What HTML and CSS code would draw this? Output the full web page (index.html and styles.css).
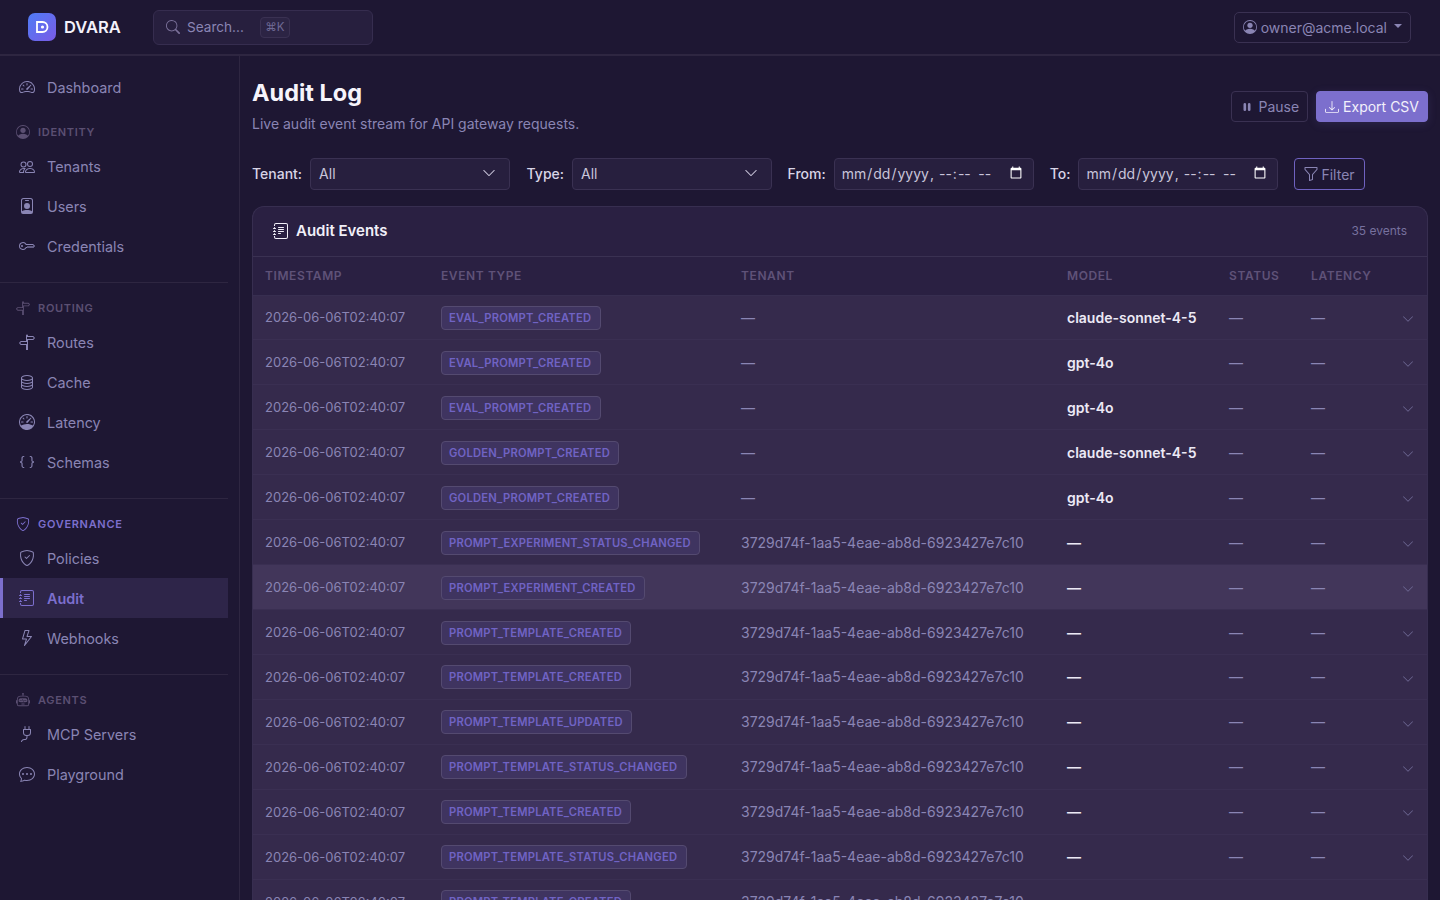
FILE: index.html
```html
<!DOCTYPE html>
<html lang="en">
<head>
<meta charset="UTF-8">
<title>DVARA - Audit Log</title>
<link rel="stylesheet" href="styles.css">
</head>
<body>

<svg class="sprite" xmlns="http://www.w3.org/2000/svg">
  <symbol id="i-speedometer2" viewBox="0 0 16 16"><path d="M8 4a.5.5 0 0 1 .5.5V6a.5.5 0 0 1-1 0V4.5A.5.5 0 0 1 8 4M3.732 5.732a.5.5 0 0 1 .707 0l.915.914a.5.5 0 1 1-.708.708l-.914-.915a.5.5 0 0 1 0-.707M2 10a.5.5 0 0 1 .5-.5h1.586a.5.5 0 0 1 0 1H2.5A.5.5 0 0 1 2 10m9.5 0a.5.5 0 0 1 .5-.5h1.5a.5.5 0 0 1 0 1H12a.5.5 0 0 1-.5-.5m.754-4.246a.39.39 0 0 0-.527-.02L7.547 9.31a.91.91 0 1 0 1.302 1.258l3.434-4.297a.39.39 0 0 0-.029-.518z"/><path fill-rule="evenodd" d="M0 10a8 8 0 1 1 15.547 2.661c-.442 1.253-1.845 1.602-2.932 1.25C11.309 13.488 9.475 13 8 13c-1.474 0-3.31.488-4.615.911-1.087.352-2.49.003-2.932-1.25A8 8 0 0 1 0 10m8-7a7 7 0 0 0-6.603 9.329c.203.575.923.876 1.68.63C4.397 12.533 6.358 12 8 12s3.604.532 4.923.96c.757.245 1.477-.056 1.68-.631A7 7 0 0 0 8 3"/></symbol>
  <symbol id="i-person-circle" viewBox="0 0 16 16"><path d="M11 6a3 3 0 1 1-6 0 3 3 0 0 1 6 0"/><path fill-rule="evenodd" d="M0 8a8 8 0 1 1 16 0A8 8 0 0 1 0 8m8-7a7 7 0 0 0-5.468 11.37C3.242 11.226 4.805 10 8 10s4.757 1.225 5.468 2.37A7 7 0 0 0 8 1"/></symbol>
  <symbol id="i-people" viewBox="0 0 16 16"><path d="M15 14s1 0 1-1-1-4-5-4-5 3-5 4 1 1 1 1zm-7.978-1L7 12.996c.001-.264.167-1.03.76-1.72C8.312 10.629 9.282 10 11 10c1.717 0 2.687.63 3.24 1.276.593.69.758 1.457.76 1.72l-.008.002-.014.002zM11 7a2 2 0 1 0 0-4 2 2 0 0 0 0 4m3-2a3 3 0 1 1-6 0 3 3 0 0 1 6 0M6.936 9.28a6 6 0 0 0-1.23-.247A7 7 0 0 0 5 9c-4 0-5 3-5 4q0 1 1 1h4.216A2.24 2.24 0 0 1 5 13c0-1.01.377-2.042 1.09-2.904.243-.294.526-.569.846-.816M4.92 10A5.5 5.5 0 0 0 4 13H1c0-.26.164-1.03.76-1.724.545-.636 1.492-1.256 3.16-1.275ZM1.5 5.5a3 3 0 1 1 6 0 3 3 0 0 1-6 0m3-2a2 2 0 1 0 0 4 2 2 0 0 0 0-4"/></symbol>
  <symbol id="i-person-badge" viewBox="0 0 16 16"><path d="M6.5 2a.5.5 0 0 0 0 1h3a.5.5 0 0 0 0-1zM11 8a3 3 0 1 1-6 0 3 3 0 0 1 6 0"/><path d="M4.5 0A2.5 2.5 0 0 0 2 2.5V14a2 2 0 0 0 2 2h8a2 2 0 0 0 2-2V2.5A2.5 2.5 0 0 0 11.5 0zM3 2.5A1.5 1.5 0 0 1 4.5 1h7A1.5 1.5 0 0 1 13 2.5v10.795a4.2 4.2 0 0 0-.776-.492C11.392 12.387 10.063 12 8 12s-3.392.387-4.224.803a4.2 4.2 0 0 0-.776.492z"/></symbol>
  <symbol id="i-key" viewBox="0 0 16 16"><path d="M0 8a4 4 0 0 1 7.465-2H14a.5.5 0 0 1 .354.146l1.5 1.5a.5.5 0 0 1 0 .708l-1.5 1.5a.5.5 0 0 1-.708 0L13 9.207l-.646.647a.5.5 0 0 1-.708 0L11 9.207l-.646.647a.5.5 0 0 1-.708 0L9 9.207l-.646.647A.5.5 0 0 1 8 10h-.535A4 4 0 0 1 0 8m4-3a3 3 0 1 0 2.712 4.285A.5.5 0 0 1 7.163 9h.63l.853-.854a.5.5 0 0 1 .708 0l.646.647.646-.647a.5.5 0 0 1 .708 0l.646.647.646-.647a.5.5 0 0 1 .708 0l.646.647.793-.793-1-1h-6.63a.5.5 0 0 1-.451-.285A3 3 0 0 0 4 5"/><path d="M4 8a1 1 0 1 1-2 0 1 1 0 0 1 2 0"/></symbol>
  <symbol id="i-signpost" viewBox="0 0 16 16"><path d="M7 7V1.414a1 1 0 0 1 2 0V2h5a1 1 0 0 1 .8.4l.975 1.3a.5.5 0 0 1 0 .6L14.8 5.6a1 1 0 0 1-.8.4H9v10H7v-5H2a1 1 0 0 1-.8-.4L.225 9.3a.5.5 0 0 1 0-.6L1.2 7.4A1 1 0 0 1 2 7zm1 3V8H2l-.75 1L2 10zm0-5h6l.75-1L14 3H8z"/></symbol>
  <symbol id="i-database" viewBox="0 0 16 16"><path d="M4.318 2.687C5.234 2.271 6.536 2 8 2s2.766.27 3.682.687C12.644 3.125 13 3.627 13 4c0 .374-.356.875-1.318 1.313C10.766 5.729 9.464 6 8 6s-2.766-.27-3.682-.687C3.356 4.875 3 4.373 3 4c0-.374.356-.875 1.318-1.313M13 5.698V7c0 .374-.356.875-1.318 1.313C10.766 8.729 9.464 9 8 9s-2.766-.27-3.682-.687C3.356 7.875 3 7.373 3 7V5.698c.271.202.58.378.904.525C4.978 6.711 6.427 7 8 7s3.022-.289 4.096-.777A5 5 0 0 0 13 5.698M14 4c0-1.007-.875-1.755-1.904-2.223C11.022 1.289 9.573 1 8 1s-3.022.289-4.096.777C2.875 2.245 2 2.993 2 4v9c0 1.007.875 1.755 1.904 2.223C4.978 15.71 6.427 16 8 16s3.022-.289 4.096-.777C13.125 14.755 14 14.007 14 13zm-1 4.698V10c0 .374-.356.875-1.318 1.313C10.766 11.729 9.464 12 8 12s-2.766-.27-3.682-.687C3.356 10.875 3 10.373 3 10V8.698c.271.202.58.378.904.525C4.978 9.71 6.427 10 8 10s3.022-.289 4.096-.777A5 5 0 0 0 13 8.698m0 3V13c0 .374-.356.875-1.318 1.313C10.766 14.729 9.464 15 8 15s-2.766-.27-3.682-.687C3.356 13.875 3 13.373 3 13v-1.302c.271.202.58.378.904.525C4.978 12.71 6.427 13 8 13s3.022-.289 4.096-.777c.324-.147.633-.323.904-.525"/></symbol>
  <symbol id="i-speedometer" viewBox="0 0 16 16"><path d="M8 2a.5.5 0 0 1 .5.5V4a.5.5 0 0 1-1 0V2.5A.5.5 0 0 1 8 2M3.732 3.732a.5.5 0 0 1 .707 0l.915.914a.5.5 0 1 1-.708.708l-.914-.915a.5.5 0 0 1 0-.707M2 8a.5.5 0 0 1 .5-.5h1.586a.5.5 0 0 1 0 1H2.5A.5.5 0 0 1 2 8m9.5 0a.5.5 0 0 1 .5-.5h1.5a.5.5 0 0 1 0 1H12a.5.5 0 0 1-.5-.5m.754-4.246a.39.39 0 0 0-.527-.02L7.547 7.31A.91.91 0 1 0 8.85 8.569l3.434-4.297a.39.39 0 0 0-.029-.518z"/><path fill-rule="evenodd" d="M6.664 15.889A8 8 0 1 1 9.336.11a8 8 0 0 1-2.672 15.78zm-4.665-4.283A11.95 11.95 0 0 1 8 10c2.186 0 4.236.585 6.001 1.606a7 7 0 1 0-12.002 0"/></symbol>
  <symbol id="i-braces" viewBox="0 0 16 16"><path d="M2.114 8.063V7.9c1.005-.102 1.497-.615 1.497-1.6V4.503c0-1.094.39-1.538 1.354-1.538h.273V2h-.376C3.25 2 2.49 2.759 2.49 4.352v1.524c0 1.094-.376 1.456-1.49 1.456v1.299c1.114 0 1.49.362 1.49 1.456v1.524c0 1.593.759 2.352 2.372 2.352h.376v-.964h-.273c-.964 0-1.354-.444-1.354-1.538V9.663c0-.984-.492-1.497-1.497-1.6M13.886 7.9v.163c-1.005.103-1.497.616-1.497 1.6v1.798c0 1.094-.39 1.538-1.354 1.538h-.273v.964h.376c1.613 0 2.372-.759 2.372-2.352v-1.524c0-1.094.376-1.456 1.49-1.456V7.332c-1.114 0-1.49-.362-1.49-1.456V4.352C13.51 2.759 12.75 2 11.138 2h-.376v.964h.273c.964 0 1.354.444 1.354 1.538V6.3c0 .984.492 1.497 1.497 1.6"/></symbol>
  <symbol id="i-shield" viewBox="0 0 16 16"><path d="M5.338 1.59a61 61 0 0 0-2.837.856.48.48 0 0 0-.328.39c-.554 4.157.726 7.19 2.253 9.188a10.7 10.7 0 0 0 2.287 2.233c.346.244.652.42.893.533q.18.085.293.118a1 1 0 0 0 .101.025 1 1 0 0 0 .1-.025q.114-.034.294-.118c.24-.113.547-.29.893-.533a10.7 10.7 0 0 0 2.287-2.233c1.527-1.997 2.807-5.031 2.253-9.188a.48.48 0 0 0-.328-.39c-.651-.213-1.75-.56-2.837-.855C9.552 1.29 8.531 1.067 8 1.067c-.53 0-1.552.223-2.662.524zM5.072.56C6.157.265 7.31 0 8 0s1.843.265 2.928.56c1.11.3 2.229.655 2.887.87a1.54 1.54 0 0 1 1.044 1.262c.596 4.477-.787 7.795-2.465 9.99a11.8 11.8 0 0 1-2.517 2.453 7 7 0 0 1-1.048.625c-.28.132-.581.24-.829.24s-.548-.108-.829-.24a7 7 0 0 1-1.048-.625 11.8 11.8 0 0 1-2.517-2.453C1.928 10.487.545 7.169 1.141 2.692A1.54 1.54 0 0 1 2.185 1.43 63 63 0 0 1 5.072.56"/><path d="M10.854 5.146a.5.5 0 0 1 0 .708l-3 3a.5.5 0 0 1-.708 0l-1.5-1.5a.5.5 0 1 1 .708-.708L7.5 7.793l2.646-2.647a.5.5 0 0 1 .708 0"/></symbol>
  <symbol id="i-journal" viewBox="0 0 16 16"><path d="M5 10.5a.5.5 0 0 1 .5-.5h2a.5.5 0 0 1 0 1h-2a.5.5 0 0 1-.5-.5m0-2a.5.5 0 0 1 .5-.5h5a.5.5 0 0 1 0 1h-5a.5.5 0 0 1-.5-.5m0-2a.5.5 0 0 1 .5-.5h5a.5.5 0 0 1 0 1h-5a.5.5 0 0 1-.5-.5m0-2a.5.5 0 0 1 .5-.5h5a.5.5 0 0 1 0 1h-5a.5.5 0 0 1-.5-.5"/><path d="M3 0h10a2 2 0 0 1 2 2v12a2 2 0 0 1-2 2H3a2 2 0 0 1-2-2v-1h1v1a1 1 0 0 0 1 1h10a1 1 0 0 0 1-1V2a1 1 0 0 0-1-1H3a1 1 0 0 0-1 1v1H1V2a2 2 0 0 1 2-2"/><path d="M1 5v-.5a.5.5 0 0 1 1 0V5h.5a.5.5 0 0 1 0 1h-2a.5.5 0 0 1 0-1zm0 3v-.5a.5.5 0 0 1 1 0V8h.5a.5.5 0 0 1 0 1h-2a.5.5 0 0 1 0-1zm0 3v-.5a.5.5 0 0 1 1 0v.5h.5a.5.5 0 0 1 0 1h-2a.5.5 0 0 1 0-1z"/></symbol>
  <symbol id="i-lightning" viewBox="0 0 16 16"><path d="M5.52.359A.5.5 0 0 1 6 0h4a.5.5 0 0 1 .474.658L8.694 6H12.5a.5.5 0 0 1 .395.807l-7 9a.5.5 0 0 1-.873-.454L6.823 9.5H3.5a.5.5 0 0 1-.48-.641zM6.374 1 4.168 8.5H7.5a.5.5 0 0 1 .478.647L6.78 13.04 11.478 7H8a.5.5 0 0 1-.474-.658L9.306 1z"/></symbol>
  <symbol id="i-robot" viewBox="0 0 16 16"><path d="M6 12.5a.5.5 0 0 1 .5-.5h3a.5.5 0 0 1 0 1h-3a.5.5 0 0 1-.5-.5M3 8.062C3 6.76 4.235 5.765 5.53 5.886a26.6 26.6 0 0 0 4.94 0C11.765 5.765 13 6.76 13 8.062v1.157a.93.93 0 0 1-.765.935c-.845.147-2.34.346-4.235.346s-3.39-.2-4.235-.346A.93.93 0 0 1 3 9.219zm4.542-.827a.25.25 0 0 0-.217.068l-.92.9a25 25 0 0 1-1.871-.183.25.25 0 0 0-.068.495c.55.076 1.232.149 2.02.193a.25.25 0 0 0 .189-.071l.754-.736.847 1.71a.25.25 0 0 0 .404.062l.932-.97a25 25 0 0 0 1.922-.188.25.25 0 0 0-.068-.495c-.538.074-1.207.145-1.98.189a.25.25 0 0 0-.166.076l-.754.785-.842-1.7a.25.25 0 0 0-.182-.135"/><path d="M8.5 1.866a1 1 0 1 0-1 0V3h-2A4.5 4.5 0 0 0 1 7.5V8a1 1 0 0 0-1 1v2a1 1 0 0 0 1 1v1a2 2 0 0 0 2 2h10a2 2 0 0 0 2-2v-1a1 1 0 0 0 1-1V9a1 1 0 0 0-1-1v-.5A4.5 4.5 0 0 0 10.5 3h-2zM14 7.5V13a1 1 0 0 1-1 1H3a1 1 0 0 1-1-1V7.5A3.5 3.5 0 0 1 5.5 4h5A3.5 3.5 0 0 1 14 7.5"/></symbol>
  <symbol id="i-plug" viewBox="0 0 16 16"><path d="M6 0a.5.5 0 0 1 .5.5V3h3V.5a.5.5 0 0 1 1 0V3h1a.5.5 0 0 1 .5.5v3A3.5 3.5 0 0 1 8.5 10c-.002.434-.01.845-.04 1.22-.041.514-.126 1.003-.317 1.424a2.08 2.08 0 0 1-.97 1.028C6.725 13.9 6.169 14 5.5 14c-.998 0-1.61.33-1.974.718A1.92 1.92 0 0 0 3 16H2c0-.616.232-1.367.797-1.968C3.374 13.42 4.261 13 5.5 13c.581 0 .962-.088 1.218-.219.241-.123.4-.3.514-.55.121-.266.193-.621.23-1.09.027-.34.035-.718.037-1.141A3.5 3.5 0 0 1 4 6.5v-3a.5.5 0 0 1 .5-.5h1V.5A.5.5 0 0 1 6 0M5 4v2.5A2.5 2.5 0 0 0 7.5 9h1A2.5 2.5 0 0 0 11 6.5V4z"/></symbol>
  <symbol id="i-chat" viewBox="0 0 16 16"><path d="M5 8a1 1 0 1 1-2 0 1 1 0 0 1 2 0m4 0a1 1 0 1 1-2 0 1 1 0 0 1 2 0m3 1a1 1 0 1 0 0-2 1 1 0 0 0 0 2"/><path d="m2.165 15.803.02-.004c1.83-.363 2.948-.842 3.468-1.105A9 9 0 0 0 8 15c4.418 0 8-3.134 8-7s-3.582-7-8-7-8 3.134-8 7c0 1.76.743 3.37 1.97 4.6a10.4 10.4 0 0 1-.524 2.318l-.003.011a11 11 0 0 1-.244.637c-.079.186.074.394.273.362a22 22 0 0 0 .693-.125m.8-3.108a1 1 0 0 0-.287-.801C1.618 10.83 1 9.468 1 8c0-3.192 3.004-6 7-6s7 2.808 7 6-3.004 6-7 6a8 8 0 0 1-2.088-.272 1 1 0 0 0-.711.074c-.387.196-1.24.57-2.634.893a11 11 0 0 0 .398-2"/></symbol>
  <symbol id="i-search" viewBox="0 0 16 16"><path d="M11.742 10.344a6.5 6.5 0 1 0-1.397 1.398h-.001q.044.06.098.115l3.85 3.85a1 1 0 0 0 1.415-1.414l-3.85-3.85a1 1 0 0 0-.115-.1zM12 6.5a5.5 5.5 0 1 1-11 0 5.5 5.5 0 0 1 11 0"/></symbol>
  <symbol id="i-download" viewBox="0 0 16 16"><path d="M.5 9.9a.5.5 0 0 1 .5.5v2.5a1 1 0 0 0 1 1h12a1 1 0 0 0 1-1v-2.5a.5.5 0 0 1 1 0v2.5a2 2 0 0 1-2 2H2a2 2 0 0 1-2-2v-2.5a.5.5 0 0 1 .5-.5"/><path d="M7.646 11.854a.5.5 0 0 0 .708 0l3-3a.5.5 0 0 0-.708-.708L8.5 10.293V1.5a.5.5 0 0 0-1 0v8.793L5.354 8.146a.5.5 0 1 0-.708.708z"/></symbol>
  <symbol id="i-funnel" viewBox="0 0 16 16"><path d="M1.5 1.5A.5.5 0 0 1 2 1h12a.5.5 0 0 1 .5.5v2a.5.5 0 0 1-.128.334L10 8.692V13.5a.5.5 0 0 1-.342.474l-3 1A.5.5 0 0 1 6 14.5V8.692L1.628 3.834A.5.5 0 0 1 1.5 3.5zm1 .5v1.308l4.372 4.858A.5.5 0 0 1 7 8.5v5.306l2-.666V8.5a.5.5 0 0 1 .128-.334L13.5 3.308V2z"/></symbol>
  <symbol id="i-pause" viewBox="0 0 16 16"><path d="M5.5 3.5A1.5 1.5 0 0 1 7 5v6a1.5 1.5 0 0 1-3 0V5a1.5 1.5 0 0 1 1.5-1.5m5 0A1.5 1.5 0 0 1 12 5v6a1.5 1.5 0 0 1-3 0V5a1.5 1.5 0 0 1 1.5-1.5"/></symbol>
  <symbol id="i-chevron" viewBox="0 0 16 16"><path fill-rule="evenodd" d="M1.646 4.646a.5.5 0 0 1 .708 0L8 10.293l5.646-5.647a.5.5 0 0 1 .708.708l-6 6a.5.5 0 0 1-.708 0l-6-6a.5.5 0 0 1 0-.708"/></symbol>
</svg>

<header class="topbar">
  <a class="brand" href="#">
    <span class="brand-mark">
      <svg viewBox="0 0 28 28" width="28" height="28"><path fill="none" stroke="#fff" stroke-width="1.8" d="M9 9h5.500a5 5 0 0 1 0 10H9z"/><circle cx="14.500" cy="14" r="1.600" fill="#fff"/></svg>
    </span>
    DVARA
  </a>
  <div class="search">
    <svg class="icon"><use href="#i-search"/></svg>
    <span>Search...</span>
    <kbd>⌘K</kbd>
  </div>
  <button class="user-btn">
    <svg class="icon"><use href="#i-person-circle"/></svg>
    owner@acme.local
    <span class="caret"></span>
  </button>
</header>

<div class="layout">
  <aside class="sidebar">
    <a class="nav-item" href="#"><svg class="icon"><use href="#i-speedometer2"/></svg>Dashboard</a>

    <div class="nav-label"><svg class="icon"><use href="#i-person-circle"/></svg>IDENTITY</div>
    <a class="nav-item" href="#"><svg class="icon"><use href="#i-people"/></svg>Tenants</a>
    <a class="nav-item" href="#"><svg class="icon"><use href="#i-person-badge"/></svg>Users</a>
    <a class="nav-item" href="#"><svg class="icon"><use href="#i-key"/></svg>Credentials</a>

    <hr class="nav-divider">
    <div class="nav-label"><svg class="icon"><use href="#i-signpost"/></svg>ROUTING</div>
    <a class="nav-item" href="#"><svg class="icon"><use href="#i-signpost"/></svg>Routes</a>
    <a class="nav-item" href="#"><svg class="icon"><use href="#i-database"/></svg>Cache</a>
    <a class="nav-item" href="#"><svg class="icon"><use href="#i-speedometer"/></svg>Latency</a>
    <a class="nav-item" href="#"><svg class="icon"><use href="#i-braces"/></svg>Schemas</a>

    <hr class="nav-divider">
    <div class="nav-label active"><svg class="icon"><use href="#i-shield"/></svg>GOVERNANCE</div>
    <a class="nav-item" href="#"><svg class="icon"><use href="#i-shield"/></svg>Policies</a>
    <a class="nav-item active" href="#"><svg class="icon"><use href="#i-journal"/></svg>Audit</a>
    <a class="nav-item" href="#"><svg class="icon"><use href="#i-lightning"/></svg>Webhooks</a>

    <hr class="nav-divider">
    <div class="nav-label"><svg class="icon"><use href="#i-robot"/></svg>AGENTS</div>
    <a class="nav-item" href="#"><svg class="icon"><use href="#i-plug"/></svg>MCP Servers</a>
    <a class="nav-item" href="#"><svg class="icon"><use href="#i-chat"/></svg>Playground</a>
  </aside>

  <main class="content">
    <div class="page-head">
      <div class="page-title">
        <h1>Audit Log</h1>
        <p>Live audit event stream for API gateway requests.</p>
      </div>
      <div class="page-actions">
        <button class="btn"><svg class="icon btn-icon"><use href="#i-pause"/></svg>Pause</button>
        <button class="btn btn-primary"><svg class="icon btn-icon"><use href="#i-download"/></svg>Export CSV</button>
      </div>
    </div>

    <form class="filters">
      <label for="f-tenant">Tenant:</label>
      <div class="select" id="f-tenant">All<svg class="icon"><use href="#i-chevron"/></svg></div>
      <label for="f-type">Type:</label>
      <div class="select" id="f-type">All<svg class="icon"><use href="#i-chevron"/></svg></div>
      <label for="f-from">From:</label>
      <input class="date" id="f-from" type="datetime-local">
      <label for="f-to">To:</label>
      <input class="date" id="f-to" type="datetime-local">
      <button type="button" class="btn btn-outline"><svg class="icon"><use href="#i-funnel"/></svg>Filter</button>
    </form>

    <section class="card">
      <div class="card-head">
        <h2><svg class="icon"><use href="#i-journal"/></svg>Audit Events</h2>
        <span class="count">35 events</span>
      </div>
      <table class="events">
        <colgroup><col class="c-time"><col class="c-type"><col class="c-tenant"><col class="c-model"><col class="c-status"><col class="c-latency"><col></colgroup>
        <thead>
          <tr><th>Timestamp</th><th>Event Type</th><th>Tenant</th><th>Model</th><th>Status</th><th>Latency</th><th></th></tr>
        </thead>
        <tbody>
          <tr><td class="ts">2026-06-06T02:40:07</td><td><span class="badge">EVAL_PROMPT_CREATED</span></td><td class="muted">—</td><td class="model">claude-sonnet-4-5</td><td class="muted">—</td><td class="muted">—</td><td class="toggle"><svg class="icon"><use href="#i-chevron"/></svg></td></tr>
          <tr><td class="ts">2026-06-06T02:40:07</td><td><span class="badge">EVAL_PROMPT_CREATED</span></td><td class="muted">—</td><td class="model">gpt-4o</td><td class="muted">—</td><td class="muted">—</td><td class="toggle"><svg class="icon"><use href="#i-chevron"/></svg></td></tr>
          <tr><td class="ts">2026-06-06T02:40:07</td><td><span class="badge">EVAL_PROMPT_CREATED</span></td><td class="muted">—</td><td class="model">gpt-4o</td><td class="muted">—</td><td class="muted">—</td><td class="toggle"><svg class="icon"><use href="#i-chevron"/></svg></td></tr>
          <tr><td class="ts">2026-06-06T02:40:07</td><td><span class="badge">GOLDEN_PROMPT_CREATED</span></td><td class="muted">—</td><td class="model">claude-sonnet-4-5</td><td class="muted">—</td><td class="muted">—</td><td class="toggle"><svg class="icon"><use href="#i-chevron"/></svg></td></tr>
          <tr><td class="ts">2026-06-06T02:40:07</td><td><span class="badge">GOLDEN_PROMPT_CREATED</span></td><td class="muted">—</td><td class="model">gpt-4o</td><td class="muted">—</td><td class="muted">—</td><td class="toggle"><svg class="icon"><use href="#i-chevron"/></svg></td></tr>
          <tr><td class="ts">2026-06-06T02:40:07</td><td><span class="badge">PROMPT_EXPERIMENT_STATUS_CHANGED</span></td><td class="muted">3729d74f-1aa5-4eae-ab8d-6923427e7c10</td><td class="model">—</td><td class="muted">—</td><td class="muted">—</td><td class="toggle"><svg class="icon"><use href="#i-chevron"/></svg></td></tr>
          <tr class="hover"><td class="ts">2026-06-06T02:40:07</td><td><span class="badge">PROMPT_EXPERIMENT_CREATED</span></td><td class="muted">3729d74f-1aa5-4eae-ab8d-6923427e7c10</td><td class="model">—</td><td class="muted">—</td><td class="muted">—</td><td class="toggle"><svg class="icon"><use href="#i-chevron"/></svg></td></tr>
          <tr><td class="ts">2026-06-06T02:40:07</td><td><span class="badge">PROMPT_TEMPLATE_CREATED</span></td><td class="muted">3729d74f-1aa5-4eae-ab8d-6923427e7c10</td><td class="model">—</td><td class="muted">—</td><td class="muted">—</td><td class="toggle"><svg class="icon"><use href="#i-chevron"/></svg></td></tr>
          <tr><td class="ts">2026-06-06T02:40:07</td><td><span class="badge">PROMPT_TEMPLATE_CREATED</span></td><td class="muted">3729d74f-1aa5-4eae-ab8d-6923427e7c10</td><td class="model">—</td><td class="muted">—</td><td class="muted">—</td><td class="toggle"><svg class="icon"><use href="#i-chevron"/></svg></td></tr>
          <tr><td class="ts">2026-06-06T02:40:07</td><td><span class="badge">PROMPT_TEMPLATE_UPDATED</span></td><td class="muted">3729d74f-1aa5-4eae-ab8d-6923427e7c10</td><td class="model">—</td><td class="muted">—</td><td class="muted">—</td><td class="toggle"><svg class="icon"><use href="#i-chevron"/></svg></td></tr>
          <tr><td class="ts">2026-06-06T02:40:07</td><td><span class="badge">PROMPT_TEMPLATE_STATUS_CHANGED</span></td><td class="muted">3729d74f-1aa5-4eae-ab8d-6923427e7c10</td><td class="model">—</td><td class="muted">—</td><td class="muted">—</td><td class="toggle"><svg class="icon"><use href="#i-chevron"/></svg></td></tr>
          <tr><td class="ts">2026-06-06T02:40:07</td><td><span class="badge">PROMPT_TEMPLATE_CREATED</span></td><td class="muted">3729d74f-1aa5-4eae-ab8d-6923427e7c10</td><td class="model">—</td><td class="muted">—</td><td class="muted">—</td><td class="toggle"><svg class="icon"><use href="#i-chevron"/></svg></td></tr>
          <tr><td class="ts">2026-06-06T02:40:07</td><td><span class="badge">PROMPT_TEMPLATE_STATUS_CHANGED</span></td><td class="muted">3729d74f-1aa5-4eae-ab8d-6923427e7c10</td><td class="model">—</td><td class="muted">—</td><td class="muted">—</td><td class="toggle"><svg class="icon"><use href="#i-chevron"/></svg></td></tr>
          <tr><td class="ts">2026-06-06T02:40:07</td><td><span class="badge">PROMPT_TEMPLATE_CREATED</span></td><td class="muted">3729d74f-1aa5-4eae-ab8d-6923427e7c10</td><td class="model">—</td><td class="muted">—</td><td class="muted">—</td><td class="toggle"><svg class="icon"><use href="#i-chevron"/></svg></td></tr>
        </tbody>
      </table>
    </section>
  </main>
</div>

</body>
</html>
```

FILE: styles.css
```css
* { margin: 0; padding: 0; box-sizing: border-box; }
html, body { height: 100%; overflow: hidden; }
body { font-family: Inter, "Liberation Sans", sans-serif; font-size: 14px; background: #1e1733; color: #8a85b4; color-scheme: dark; }
a { color: inherit; text-decoration: none; }
button { font: inherit; cursor: pointer; }
.sprite { display: none; }
.icon { width: 16px; height: 16px; fill: currentColor; flex: none; }

/* Top bar */
.topbar { height: 56px; display: flex; align-items: center; padding: 0 28px; background: #1e1733; border-bottom: 2px solid #2e2641; }
.brand { display: flex; align-items: center; gap: 8px; width: 125px; font-size: 16.5px; font-weight: 600; color: #f4f2fa; }
.brand-mark { width: 28px; height: 28px; border-radius: 7px; background: linear-gradient(135deg, #4f7cf5, #7a5be6); }
.brand-mark svg { display: block; }
.search { width: 220px; height: 35px; display: flex; align-items: center; padding: 0 12px; font-size: 13.6px; background: #271f3e; border: 1px solid #362d4f; border-radius: 6px; color: #8a85b4; }
.search .icon { width: 14px; height: 14px; margin-right: 7px; color: #7a7099; }
.search kbd { margin-left: 16px; width: 30px; height: 21px; display: flex; align-items: center; justify-content: center; font-family: inherit; font-size: 11.5px; color: #6f6a95; background: #2c2444; border: 1px solid #3a3152; border-radius: 4px; }
.user-btn { margin-left: auto; margin-right: 1px; height: 31px; display: flex; align-items: center; gap: 4px; padding: 0 8px; background: transparent; border: 1px solid #3a3152; border-radius: 5px; color: #8a85b4; }
.user-btn .icon { width: 14px; height: 14px; }
.caret { margin-left: 3px; margin-bottom: 2px; border-top: 4.5px solid currentColor; border-left: 4.5px solid transparent; border-right: 4.5px solid transparent; }

.layout { display: flex; height: calc(100vh - 56px); }

/* Sidebar */
.sidebar { width: 240px; flex: none; padding: 11.5px 11px 0 0; border-right: 1px solid #2e2641; }
.nav-item { height: 39.9px; display: flex; align-items: center; gap: 12px; padding-left: 19px; font-size: 14.4px; color: #8a85b4; }
.nav-item.active { padding-left: 16px; border-left: 3px solid #7c6fcd; background: #2e2549; color: #7c6fcd; font-weight: 600; }
.nav-label { height: 16px; margin: 17px 0 6.2px; padding-left: 16px; display: flex; align-items: center; gap: 8px; font-size: 11px; font-weight: 600; letter-spacing: 0.7px; color: #5b4f72; }
.nav-label .icon { width: 14px; height: 14px; }
.nav-label.active { color: #7c6fcd; }
.nav-divider { margin-top: 16.1px; border: 0; border-top: 1px solid #2e2641; }

/* Main */
.content { flex: 1; min-width: 0; padding: 21px 12px 0; overflow: hidden; }
.page-head { display: flex; justify-content: space-between; align-items: flex-end; height: 58px; }
.page-title { margin-bottom: 2px; }
.page-head h1 { font-size: 23.5px; font-weight: 700; line-height: 34px; color: #f6f4fb; }
.page-head p { margin-top: 5px; font-size: 14px; line-height: 18px; color: #8a85b4; }
.page-actions { display: flex; gap: 8px; margin-bottom: 13px; }
.btn { height: 31px; display: flex; align-items: center; gap: 4px; padding: 0 8px; border: 1px solid #3a3152; border-radius: 4px; background: transparent; color: #8a85b4; }
.btn-icon { width: 14px; height: 14px; }
.btn-primary { background: #7c6fcd; border-color: #7c6fcd; color: #f3f1fb; box-shadow: 0 2px 10px rgba(124, 111, 205, 0.15); }
.btn-outline { height: 32px; gap: 2px; padding: 0 9px 0 8px; border-color: #6f62c0; color: #8a85b4; }

.filters { display: flex; align-items: center; height: 32px; margin-top: 23px; }
.filters label { margin-right: 8px; margin-bottom: 2px; color: #d8d4e6; font-weight: 500; }
.select { width: 200px; height: 32px; margin-right: 16.5px; display: flex; align-items: center; justify-content: space-between; padding: 0 13px 2px 8px; background: #271f3e; border: 1px solid #3a3152; border-radius: 4px; color: #c9c5da; }
.select + label + .select { margin-right: 15.5px; }
.select .icon { width: 14px; height: 14px; color: #c9c5da; }
.date { width: 200px; height: 32px; margin-right: 16px; padding: 0 8px 2px 6px; font: inherit; background: #271f3e; border: 1px solid #3a3152; border-radius: 4px; color: #c9c5da; }
.date::-webkit-datetime-edit-ampm-field { margin-left: 3px; }

/* Events card */
.card { margin-top: 16px; background: #2a2042; border: 1px solid #372e50; border-bottom: 0; border-radius: 12px 12px 0 0; overflow: hidden; }
.card-head { height: 50px; display: flex; align-items: center; justify-content: space-between; padding: 0 20px 2px; border-bottom: 1px solid #3a3152; }
.card-head h2 { display: flex; align-items: center; gap: 7px; font-size: 15px; font-weight: 600; color: #f1eff8; }
.count { font-size: 12px; color: #77719e; }
.events { width: 100%; border-collapse: collapse; table-layout: fixed; font-size: 14px; }
.c-time { width: 176px; }
.c-type { width: 300px; }
.c-tenant { width: 326px; }
.c-model { width: 162px; }
.c-status { width: 82px; }
.c-latency { width: 80px; }
.events th { height: 38px; padding: 0 12px 1px; text-align: left; font-size: 12px; font-weight: 600; letter-spacing: 0.6px; text-transform: uppercase; color: #5f5278; border-bottom: 1px solid #372e50; }
.events td { height: 44.95px; padding: 0 12px; background: #352a4c; border-bottom: 1px solid #3a2f52; white-space: nowrap; }
.events tr.hover td { background: #42365a; }
.ts { font-size: 13px; color: #8a85b4; }
.muted { color: #8a85b4; }
.model { color: #ece9f5; font-weight: 600; }
.badge { display: inline-block; height: 24px; line-height: 22px; margin-top: 1px; padding: 0 8.5px 0 7px; font-size: 11.2px; font-weight: 600; letter-spacing: 0.22px; color: #7063c4; background: #3f3460; border: 1px solid #544a70; border-radius: 4px; }
.toggle { text-align: right; }
.toggle .icon { width: 12px; height: 12px; color: #6f6a95; display: inline-block; vertical-align: middle; margin-right: 1px; }
```
